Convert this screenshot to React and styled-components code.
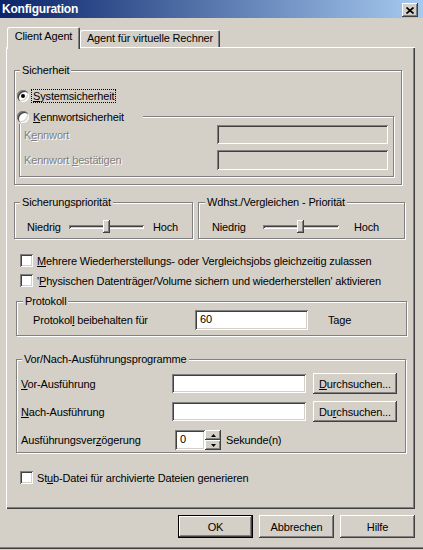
import React from "react"
import styled, { createGlobalStyle, css } from "styled-components"

const face = "#D4D0C8"

const Global = createGlobalStyle`
  html, body { margin:0; padding:0; background:${face}; }
  body { font-family:"Liberation Sans", Arial, sans-serif; font-size:11px; letter-spacing:-0.15px; color:#000; }
`

const raised = css`
  box-shadow: inset -1px -1px 0 #404040, inset 1px 1px 0 #fff, inset -2px -2px 0 #808080, inset 2px 2px 0 ${face};
`
const sunken = css`
  box-shadow: inset 1px 1px 0 #808080, inset -1px -1px 0 #fff, inset 2px 2px 0 #404040, inset -2px -2px 0 ${face};
`

const Window = styled.div`
  width:423px;
  height:549px;
  display:flex;
  flex-direction:column;
  background:${face};
  box-shadow: inset 0 -1px 0 #404040, inset 0 -2px 0 #808080;
`

const TitleBar = styled.div`
  height:18px;
  flex:none;
  display:flex;
  align-items:center;
  justify-content:space-between;
  padding:0 5px 0 2px;
  background:linear-gradient(to right, #0A246A, #A6CAF0);
  color:#fff;
  font-weight:bold;
  font-size:12px;
  letter-spacing:-0.2px;
`

const CloseBtn = styled.div`
  width:16px;
  height:14px;
  margin-top:2px;
  background:${face};
  display:flex;
  align-items:center;
  justify-content:center;
  ${raised}
`

const Body = styled.div`
  display:flex;
  flex-direction:column;
  padding:9px 8px 0 6px;
`

const TabStrip = styled.div`
  display:flex;
  align-items:flex-end;
  height:20px;
  padding-left:1px;
`

const Tab = styled.div`
  width:${p => p.$w}px;
  height:${p => p.$active ? 22 : 17}px;
  margin-bottom:${p => p.$active ? -2 : 0}px;
  position:relative;
  z-index:${p => p.$active ? 1 : 0};
  box-sizing:border-box;
  text-align:center;
  padding-top:${p => p.$active ? 3 : 2}px;
  background:${face};
  border-radius:2px 2px 0 0;
  box-shadow: inset 1px 1px 0 #fff, inset -1px 0 0 #404040, inset -2px 0 0 #808080;
  line-height:13px;
`

const Pane = styled.div`
  width:409px;
  height:462px;
  box-sizing:border-box;
  display:flex;
  flex-direction:column;
  align-items:flex-start;
  box-shadow: inset 1px 1px 0 #fff, inset -1px -1px 0 #404040, inset -2px -2px 0 #808080;
`

const GroupBox = styled.div`
  box-sizing:border-box;
  width:${p => p.$w}px;
  height:${p => p.$h}px;
  margin:${p => p.$mt || 0}px 0 0 ${p => p.$ml || 0}px;
  border:1px solid #808080;
  box-shadow: inset 1px 1px 0 #fff, 1px 1px 0 #fff;
  display:flex;
  flex-direction:column;
  align-items:flex-start;
`

const Caption = styled.div`
  margin:-7px 0 0 ${p => p.$ml}px;
  padding:0 2px;
  line-height:13px;
  background:${face};
`

const Row = styled.div`
  display:flex;
  align-items:center;
  height:${p => p.$h || 15}px;
  margin:${p => p.$mt || 0}px 0 0 ${p => p.$ml || 0}px;
  padding-left:${p => p.$pl || 0}px;
  align-self:stretch;
`

const RadioRow = styled.div`
  display:flex;
  align-items:center;
  align-self:flex-start;
  height:15px;
  margin:${p => p.$mt}px 0 0 ${p => p.$ml}px;
  padding:0 ${p => p.$pr || 0}px 0 0;
  background:${face};
`

const RadioDot = styled.span`
  width:12px;
  height:12px;
  flex:none;
  border-radius:50%;
  background:#fff;
  margin-right:4px;
  display:flex;
  align-items:center;
  justify-content:center;
  box-shadow: inset 1px 1px 0 #808080, inset 2px 2px 0 #404040, inset -1px -1px 0 #fff, inset -2px -2px 0 ${face};
  &::after{
    content:"";
    width:4px;
    height:4px;
    border-radius:50%;
    background:#000;
    display:${p => p.$on ? "block" : "none"};
  }
`

const Focus = styled.span`
  border:1px dotted #000;
  padding:0 1px;
  margin-left:-2px;
  line-height:12px;
`

const Mn = styled.span`
  text-decoration:underline;
  text-underline-offset:1px;
`

const Label = styled.span`
  width:${p => p.$w ? p.$w + "px" : "auto"};
  flex:none;
  margin-left:${p => p.$ml || 0}px;
  white-space:nowrap;
  ${p => p.$disabled && css`
    color:#808080;
    text-shadow:1px 1px 0 #fff;
  `}
`

const Field = styled.div`
  box-sizing:border-box;
  width:${p => p.$w}px;
  height:${p => p.$h || 19}px;
  flex:none;
  margin-left:${p => p.$ml || 0}px;
  padding:3px 0 0 5px;
  line-height:13px;
  background:${p => p.$disabled ? face : "#fff"};
  ${sunken}
`

const Inner = styled(GroupBox)`
  align-items:stretch;
`

const Check = styled.span`
  width:13px;
  height:13px;
  flex:none;
  background:#fff;
  margin-right:4px;
  ${sunken}
`

const Button = styled.div`
  box-sizing:border-box;
  width:${p => p.$w}px;
  height:${p => p.$h}px;
  flex:none;
  margin-left:${p => p.$ml || 0}px;
  display:flex;
  align-items:center;
  justify-content:center;
  background:${face};
  ${raised}
  ${p => p.$default && css`
    border:1px solid #000;
    box-shadow: inset -1px -1px 0 #404040, inset 1px 1px 0 #fff, inset -2px -2px 0 #808080;
  `}
`

const Slider = styled.div`
  position:relative;
  width:${p => p.$w}px;
  height:15px;
  flex:none;
  display:flex;
  align-items:center;
`

const Track = styled.div`
  width:100%;
  height:4px;
  ${sunken}
  background:${face};
`

const Thumb = styled.div`
  position:absolute;
  top:1px;
  width:7px;
  height:13px;
  background:${face};
  ${raised}
`

const PriorityRow = styled.div`
  display:flex;
  gap:5px;
  margin:17px 0 0 8px;
`

const Spin = styled.div`
  display:flex;
  flex-direction:column;
  width:16px;
  height:20px;
  flex:none;
`

const SpinBtn = styled.div`
  flex:1;
  display:flex;
  align-items:center;
  justify-content:center;
  background:${face};
  ${raised}
`

const Footer = styled.div`
  display:flex;
  justify-content:flex-end;
  gap:6px;
  margin-top:6px;
`

const PriorityGroup = ({ title, w, capMl, pl, labelW, trackW, thumb, hochMl }) => (
  <GroupBox $w={w} $h={37}>
    <Caption $ml={capMl}>{title}</Caption>
    <Row $mt={10} $pl={pl}>
      <Label $w={labelW}>Niedrig</Label>
      <Slider $w={trackW}>
        <Track />
        <Thumb style={{ left: thumb }} />
      </Slider>
      <Label $ml={hochMl}>Hoch</Label>
    </Row>
  </GroupBox>
)

const CheckRow = ({ mt, children }) => (
  <Row $h={13} $mt={mt} $ml={14}>
    <Check />
    <Label>{children}</Label>
  </Row>
)

const Arrow = ({ up }) => (
  <svg width="5" height="3" viewBox="0 0 5 3">
    <path d={up ? "M2.5 0 L5 3 L0 3 Z" : "M0 0 L5 0 L2.5 3 Z"} fill="#000" />
  </svg>
)

export default function App() {
  return (
    <>
      <Global />
      <Window>
        <TitleBar>
          <span>Konfiguration</span>
          <CloseBtn>
            <svg width="8" height="7" viewBox="0 0 8 7">
              <path d="M0.5 0.5 L7.5 6.5 M7.5 0.5 L0.5 6.5" stroke="#000" strokeWidth="1.7" />
            </svg>
          </CloseBtn>
        </TitleBar>
        <Body>
          <TabStrip>
            <Tab $active $w={73}>Client Agent</Tab>
            <Tab $w={140}>Agent für virtuelle Rechner</Tab>
          </TabStrip>
          <Pane>
            <GroupBox $w={388} $h={115} $mt={23} $ml={8}>
              <Caption $ml={5}>Sicherheit</Caption>
              <RadioRow $mt={11} $ml={2}>
                <RadioDot $on />
                <Focus><Mn>S</Mn>ystemsicherheit</Focus>
              </RadioRow>
              <Inner $w={375} $h={61} $mt={13} $ml={4}>
                <RadioRow $mt={-8} $ml={-3} $pr={19}>
                  <RadioDot />
                  <span><Mn>K</Mn>ennwortsicherheit</span>
                </RadioRow>
                <Row $h={19} $mt={1} $pl={4}>
                  <Label $disabled $w={193}>K<Mn>e</Mn>nnwort</Label>
                  <Field $disabled $w={171} />
                </Row>
                <Row $h={20} $mt={6} $pl={4}>
                  <Label $disabled $w={193}>Kennwort <Mn>b</Mn>estätigen</Label>
                  <Field $disabled $w={171} $h={20} />
                </Row>
              </Inner>
            </GroupBox>

            <PriorityRow>
              <PriorityGroup title="Sicherungspriorität" w={179} capMl={5} pl={12}
                labelW={42} trackW={75} thumb={34} hochMl={9} />
              <PriorityGroup title="Wdhst./Vergleichen - Priorität" w={207} capMl={6} pl={13}
                labelW={51} trackW={76} thumb={34} hochMl={15} />
            </PriorityRow>

            <CheckRow mt={15}><Mn>M</Mn>ehrere Wiederherstellungs- oder Vergleichsjobs gleichzeitig zulassen</CheckRow>
            <CheckRow mt={7}>'<Mn>P</Mn>hysischen Datenträger/Volume sichern und wiederherstellen' aktivieren</CheckRow>

            <GroupBox $w={391} $h={35} $mt={14} $ml={10}>
              <Caption $ml={6}>Protokoll</Caption>
              <Row $h={20} $mt={2} $pl={16}>
                <Label $w={162}>Protokol<Mn>l</Mn> beibehalten für</Label>
                <Field $w={113} $h={20}>60</Field>
                <Label $ml={20}>Tage</Label>
              </Row>
            </GroupBox>

            <GroupBox $w={390} $h={94} $mt={23} $ml={10}>
              <Caption $ml={5}>Vor/Nach-Ausführungsprogramme</Caption>
              <Row $h={21} $mt={7} $pl={4}>
                <Label $w={151}><Mn>V</Mn>or-Ausführung</Label>
                <Field $w={134} />
                <Button $w={84} $h={21} $ml={7}><span><Mn>D</Mn>urchsuchen...</span></Button>
              </Row>
              <Row $h={21} $mt={7} $pl={4}>
                <Label $w={151}><Mn>N</Mn>ach-Ausführung</Label>
                <Field $w={134} />
                <Button $w={84} $h={21} $ml={7}><span>Du<Mn>r</Mn>chsuchen...</span></Button>
              </Row>
              <Row $h={20} $mt={8} $pl={4}>
                <Label $w={154}>Ausführungsver<Mn>z</Mn>ögerung</Label>
                <Field $w={30} $h={20}>0</Field>
                <Spin>
                  <SpinBtn><Arrow up /></SpinBtn>
                  <SpinBtn><Arrow /></SpinBtn>
                </Spin>
                <Label $ml={5}>Sekunde(n)</Label>
              </Row>
            </GroupBox>

            <CheckRow mt={18}>St<Mn>u</Mn>b-Datei für archivierte Dateien generieren</CheckRow>
          </Pane>
          <Footer>
            <Button $default $w={75} $h={23}>OK</Button>
            <Button $w={75} $h={23}>Abbrechen</Button>
            <Button $w={75} $h={23}>Hilfe</Button>
          </Footer>
        </Body>
      </Window>
    </>
  )
}
